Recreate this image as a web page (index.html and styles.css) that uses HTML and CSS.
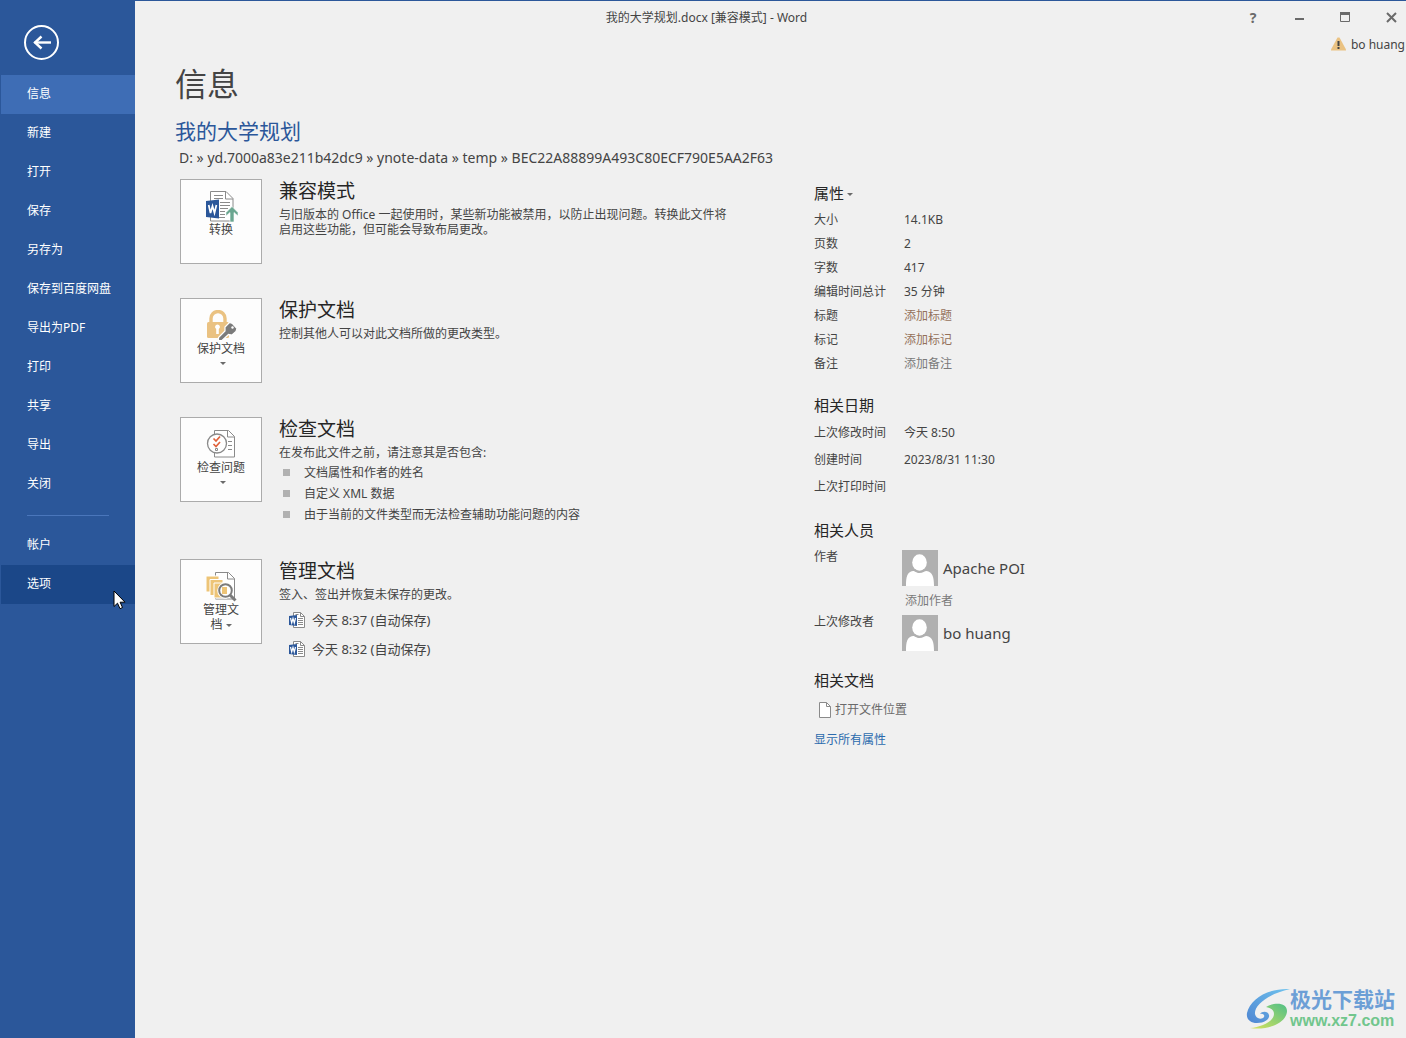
FILE: index.html
```html
<!DOCTYPE html>
<html lang="zh-CN">
<head>
<meta charset="utf-8">
<title>我的大学规划.docx [兼容模式] - Word</title>
<link rel="stylesheet" href="styles.css">
</head>
<body>
<svg class="defs" aria-hidden="true">
  <symbol id="word-file" viewBox="0 0 16 17">
    <path d="M4.500 .5h7l4 4v11h-11z" fill="#fff" stroke="#8a8a8a"/>
    <path d="M11.500 .5v4h4M9 6.500h5M9 8.500h5M9 10.500h5M9 12.500h5M6.500 2.500h3" fill="none" stroke="#8a8a8a"/>
    <path d="M0 4l8-1v11l-8-1z" fill="#2b579a"/>
    <path d="M1.500 6l1.200 5 1.300-4.500 1.300 4.500 1.200-5" fill="none" stroke="#fff" stroke-width="1.200"/>
  </symbol>
  <symbol id="avatar" viewBox="0 0 36 36">
    <path d="M0 0h36v36H0z" fill="#b0b0b0"/>
    <ellipse cx="17.500" cy="12.500" rx="7.300" ry="8.200" fill="#fff"/>
    <path d="M4 36c0-9 1-14 7-15 2 0 3 2 6.500 2s5-2 7-2c6 1 7.500 6 7.500 15z" fill="#fff"/>
  </symbol>
</svg>

<aside class="sidebar">
  <button class="back" aria-label="返回">
    <svg width="35" height="35" viewBox="0 0 35 35" fill="none" stroke="#fff"><circle cx="17.500" cy="17.500" r="16.500" stroke-width="2"/><path d="M10.500 17.500H27" stroke-width="2.400"/><path d="M17.500 11.500l-6.500 6 6.500 6" stroke-width="2.400"/></svg>
  </button>
  <nav class="menu">
    <a class="item active" href="#info">信息</a>
    <a class="item" href="#new">新建</a>
    <a class="item" href="#open">打开</a>
    <a class="item" href="#save">保存</a>
    <a class="item" href="#save-as">另存为</a>
    <a class="item" href="#baidu">保存到百度网盘</a>
    <a class="item" href="#pdf">导出为PDF</a>
    <a class="item" href="#print">打印</a>
    <a class="item" href="#share">共享</a>
    <a class="item" href="#export">导出</a>
    <a class="item" href="#close">关闭</a>
    <hr class="divider">
    <a class="item" href="#account">帐户</a>
    <a class="item hovered" href="#options">选项</a>
  </nav>
</aside>

<div class="main">
  <header class="titlebar">
    <div class="title">我的大学规划.docx [兼容模式] - Word</div>
    <div class="controls">
      <button class="control help" aria-label="帮助">?</button>
      <button class="control" aria-label="最小化"><svg width="11" height="11"><path d="M1 6h9v2H1z" fill="#6a6a6a"/></svg></button>
      <button class="control" aria-label="最大化"><svg width="11" height="11"><path d="M.5 1v8.500h9V1" fill="none" stroke="#6a6a6a"/><path d="M0 0h10v3H0z" fill="#6a6a6a"/></svg></button>
      <button class="control" aria-label="关闭"><svg width="11" height="11"><path d="M1 1l9 9M10 1l-9 9" stroke="#6a6a6a" stroke-width="2"/></svg></button>
    </div>
  </header>
  <div class="user">
    <svg width="15" height="14" viewBox="0 0 15 14"><path d="M6.500 .5h2L15 12.500v1H0v-1z" fill="#eac282"/><path d="M6.500 4h2v5h-2zM6.500 10h2v2h-2z" fill="#444"/></svg>
    <span>bo huang</span>
  </div>

  <main class="page">
    <h1>信息</h1>
    <h2>我的大学规划</h2>
    <p class="path">D: » yd.7000a83e211b42dc9 » ynote-data » temp » BEC22A88899A493C80ECF790E5AA2F63</p>

    <div class="columns">
      <div class="actions">
        <section class="action">
          <button class="tile">
            <svg width="32" height="31" viewBox="0 0 32 31">
              <path d="M4.500 .5h15.500l7 7v22.500H4.500z" fill="#fff" stroke="#8a8a8a"/>
              <path d="M19.500 .5v7.500h7.500M8 4.500h9M8 7.500h9M14 11.500h10M14 14.500h10M14 17.500h8M14 20.500h5M14 23.500h5M8 26.500h11" fill="none" stroke="#8a8a8a"/>
              <path d="M0 10l13-1.500v19L0 26z" fill="#2b579a"/>
              <path d="M2.700 14l1.800 8 2-7 2 7 1.900-8" fill="none" stroke="#fff" stroke-width="1.700"/>
              <path d="M24 31v-9.500l-4 3.500v-3.500l6-6 6 6v3.500l-4-3.500V31z" fill="#6aa690" stroke="#fff" stroke-width=".6"/>
            </svg>
            <span>转换</span>
          </button>
          <div class="body">
            <h3>兼容模式</h3>
            <p>与旧版本的 Office 一起使用时，某些新功能被禁用，以防止出现问题。转换此文件将启用这些功能，但可能会导致布局更改。</p>
          </div>
        </section>

        <section class="action">
          <button class="tile">
            <svg width="32" height="31" viewBox="0 0 32 31">
              <path d="M5 13V8.500a7 7 0 0 1 14 0V13" fill="none" stroke="#eac282" stroke-width="3.400"/>
              <rect x="1" y="12" width="22" height="16" rx="1.500" fill="#eac282"/>
              <path d="M11.500 14.500a2.500 2.500 0 0 1 1.300 4.600V24h-2.600v-4.900a2.500 2.500 0 0 1 1.300-4.600z" fill="#fff"/>
              <path d="M23.500 12.500l3 1 4.500 5-1 3-4 3.500-3.500-.5L16 30.500h-3.500V27.500l6.500-6.500 0-4z" fill="#7b7b7b" stroke="#fff" stroke-width="1.200"/>
              <circle cx="26.500" cy="17.500" r="1.200" fill="#fff"/>
            </svg>
            <span>保护文档</span><i class="caret"></i>
          </button>
          <div class="body">
            <h3>保护文档</h3>
            <p>控制其他人可以对此文档所做的更改类型。</p>
          </div>
        </section>

        <section class="action">
          <button class="tile">
            <svg width="32" height="31" viewBox="0 0 32 31" fill="none" stroke="#8a8a8a">
              <path d="M8.500 1.500h14l6 6v20.500h-20z" fill="#fff"/>
              <path d="M21.500 1.500v6.500h7M22 12.500h4M22 16.500h4M22 20.500h4"/>
              <circle cx="11" cy="14.500" r="9.500" fill="#fff" stroke-width="1.300"/>
              <path d="M7.500 9.500l2.500 2.500 4-4.500M7.500 15l2.500 2.500 4-4.500" stroke="#e0623c" stroke-width="1.700"/>
              <path d="M9.500 19.500h2v2h-2z"/>
            </svg>
            <span>检查问题</span><i class="caret"></i>
          </button>
          <div class="body">
            <h3>检查文档</h3>
            <p>在发布此文件之前，请注意其是否包含:</p>
            <ul class="issues">
              <li>文档属性和作者的姓名</li>
              <li>自定义 XML 数据</li>
              <li>由于当前的文件类型而无法检查辅助功能问题的内容</li>
            </ul>
          </div>
        </section>

        <section class="action">
          <button class="tile">
            <svg width="32" height="31" viewBox="0 0 32 31">
              <path d="M9.500 1.500h13l6 6v20.500h-19z" fill="#fff" stroke="#8a8a8a"/>
              <path d="M21.500 1.500v6.500h7" fill="none" stroke="#8a8a8a"/>
              <path d="M0 5h13v16H0z" fill="#edc477" stroke="#fff"/>
              <path d="M4 8.500h13v16H4z" fill="#edc477" stroke="#fff"/>
              <path d="M8 12h13v15H8z" fill="#edc477" stroke="#fff"/>
              <circle cx="19.500" cy="19.500" r="6.300" fill="#fff" stroke="#fff" stroke-width="4"/>
              <circle cx="19.500" cy="19.500" r="6.300" fill="#fff" stroke="#7b7b7b" stroke-width="2"/>
              <path d="M16 16h5v7h-5z" fill="#edc477"/>
              <path d="M24 24l5.500 5.500" stroke="#7b7b7b" stroke-width="3"/>
            </svg>
            <span>管理文<br>档<i class="caret inline"></i></span>
          </button>
          <div class="body">
            <h3>管理文档</h3>
            <p>签入、签出并恢复未保存的更改。</p>
            <ul class="versions">
              <li><a href="#v837"><svg width="16" height="17"><use href="#word-file"/></svg>今天 8:37 (自动保存)</a></li>
              <li><a href="#v832"><svg width="16" height="17"><use href="#word-file"/></svg>今天 8:32 (自动保存)</a></li>
            </ul>
          </div>
        </section>
      </div>

      <div class="properties">
        <h4>属性<i class="caret inline"></i></h4>
        <dl class="facts">
          <dt>大小</dt><dd>14.1KB</dd>
          <dt>页数</dt><dd>2</dd>
          <dt>字数</dt><dd>417</dd>
          <dt>编辑时间总计</dt><dd>35 分钟</dd>
          <dt>标题</dt><dd class="hint warm">添加标题</dd>
          <dt>标记</dt><dd class="hint warm">添加标记</dd>
          <dt>备注</dt><dd class="hint">添加备注</dd>
        </dl>
        <h4>相关日期</h4>
        <dl class="facts dates">
          <dt>上次修改时间</dt><dd>今天 8:50</dd>
          <dt>创建时间</dt><dd>2023/8/31 11:30</dd>
          <dt>上次打印时间</dt><dd></dd>
        </dl>
        <h4>相关人员</h4>
        <dl class="people">
          <dt>作者</dt>
          <dd>
            <div class="person"><svg width="36" height="36"><use href="#avatar"/></svg>Apache POI</div>
            <div class="add">添加作者</div>
          </dd>
          <dt>上次修改者</dt>
          <dd><div class="person"><svg width="36" height="36"><use href="#avatar"/></svg>bo huang</div></dd>
        </dl>
        <h4>相关文档</h4>
        <a class="location" href="#location"><svg width="12" height="16"><path d="M.5.5h7l4 4v11H.5z" fill="#fff" stroke="#8a8a8a"/><path d="M7.500.5v4h4" fill="none" stroke="#8a8a8a"/></svg>打开文件位置</a>
        <a class="all" href="#all">显示所有属性</a>
      </div>
    </div>
  </main>
</div>

<svg class="cursor" width="13" height="20" viewBox="0 0 13 20"><path d="M1 1v15.500l3.500-3.300 2.500 5.500 2.500-1.200-2.400-5.300H12z" fill="#fff" stroke="#000"/></svg>

<div class="watermark">
  <svg width="44" height="42" viewBox="0 0 44 42">
    <defs>
      <linearGradient id="blue" x1="0" y1="1" x2="1" y2="0"><stop offset="0" stop-color="#4f86d2"/><stop offset="1" stop-color="#6fc3ee"/></linearGradient>
      <linearGradient id="green" x1="0" y1="1" x2="1" y2="0"><stop offset="0" stop-color="#d9e35c"/><stop offset="1" stop-color="#4fbf86"/></linearGradient>
    </defs>
    <path d="M44 1C22 0 4 11 1 25c-1 6 3 10 10 10 8 0 13-4 12-8-1-4-7-4-9-1 3-1 5 1 4 3-2 3-8 2-9-3C8 17 22 6 44 1z" fill="url(#blue)"/>
    <path d="M20 19c8-5 21-5 21 4 0 11-18 20-37 17 12-1 24-7 24-14 0-4-3-6-8-7z" fill="url(#green)"/>
  </svg>
  <div class="mark-text"><b>极光下载站</b><span>www.xz7.com</span></div>
</div>
</body>
</html>
```
FILE: styles.css
```css
* { box-sizing: border-box; }

body {
  margin: 0;
  min-height: 100vh;
  display: flex;
  position: relative;
  background: #f0f0f0;
  color: #444;
  font: 12px/15px "Noto Sans", "Noto Sans CJK SC", sans-serif;
}

h1, h2, h3, h4, p, ul, dl, dd { margin: 0; padding: 0; font-weight: 400; }
ul { list-style: none; }
a { color: inherit; text-decoration: none; }
button { font: inherit; color: inherit; padding: 0; border: 0; background: none; }
svg { flex: none; display: block; }
.defs { position: absolute; width: 0; height: 0; }

/* Sidebar */
.sidebar { width: 135px; flex: none; background: #2b579a; color: #fff; padding-top: 25px; }
.back { display: block; margin: 0 0 15px 24px; }
.menu { display: flex; flex-direction: column; padding-left: 1px; }
.item { line-height: 37px; padding: 0 0 2px 26px; }
.active { background: #3e6db5; }
.hovered { background: #1b4788; }
.divider { width: 82px; height: 1px; border: 0; background: #4a76bb; margin: 11px 0 10px 26px; }

/* Title bar */
.main { flex: 1; min-width: 0; border-top: 1px solid #2b579a; }
.titlebar { display: flex; align-items: center; height: 32px; }
.title { flex: 1; text-align: center; padding-left: 40px; }
.controls { display: flex; gap: 16px; }
.control { width: 30px; height: 30px; display: flex; align-items: center; justify-content: center; }
.help { font-size: 14px; font-weight: 700; color: #6a6a6a; }
.user { display: flex; align-items: center; justify-content: flex-end; gap: 5px; height: 22px; padding-right: 1px; }

/* Page */
.page { padding-left: 40px; }
h1 { font-size: 32px; line-height: 58px; }
h2 { font-size: 21px; line-height: 36px; color: #2b579a; }
.path { font-size: 14px; line-height: 18px; padding-left: 4px; }
.columns { display: flex; padding: 12px 0 0 5px; }
.actions { flex: 0 1 634px; display: flex; flex-direction: column; gap: 34px; }

.action { display: flex; gap: 17px; }
.tile {
  width: 82px; height: 85px; flex: none;
  display: flex; flex-direction: column; align-items: center;
  padding-top: 11px;
  border: 1px solid #ababab; background: #fdfdfd;
}
.tile svg { margin-left: 2px; }
.body { max-width: 456px; }
h3 { font-size: 19px; line-height: 25px; margin-bottom: 3px; color: #262626; }
.caret { border: 3px solid transparent; border-top-color: #6a6a6a; border-bottom: 0; margin: 6px 0 0 3px; }
.caret.inline { display: inline-block; vertical-align: middle; margin: 0 0 0 3px; }

.issues { margin-top: 2px; }
.issues li { display: flex; align-items: center; gap: 14px; padding-left: 4px; line-height: 21px; }
.issues li::before { content: ""; width: 7px; height: 7px; background: #b1b1b1; }
.versions { margin-top: 4px; font-size: 13px; line-height: 29px; }
.versions a { display: flex; align-items: center; gap: 7px; padding-left: 10px; }

/* Properties */
.properties { flex: 1; }
h4 { font-size: 15px; line-height: 29px; color: #262626; }
dl + h4 { margin-top: 15px; }
.facts { display: grid; grid-template-columns: 90px 1fr; line-height: 24px; }
.dates { grid-auto-rows: 27px; line-height: 26px; }
.hint, .add { color: #7a7a7a; }
.warm { color: #94705a; }
.people { display: grid; grid-template-columns: 88px 1fr; padding-top: 5px; }
.people dt { line-height: 13px; }
.person { display: flex; align-items: center; gap: 5px; font-size: 15px; }
.add { line-height: 29px; padding-left: 3px; }
.location { display: flex; align-items: center; gap: 4px; height: 29px; padding-left: 5px; color: #6a6a6a; }
.all { line-height: 31px; color: #2a6aad; }

/* Overlays */
.cursor { position: absolute; left: 113px; top: 590px; }
.watermark { position: absolute; right: 11px; bottom: 8px; display: flex; align-items: center; }
.mark-text { display: flex; flex-direction: column; }
.mark-text b { font-size: 21px; line-height: 23px; color: #6c9fd6; }
.mark-text span { font: 700 16px/19px "Liberation Sans", sans-serif; color: #71c68d; }
```
